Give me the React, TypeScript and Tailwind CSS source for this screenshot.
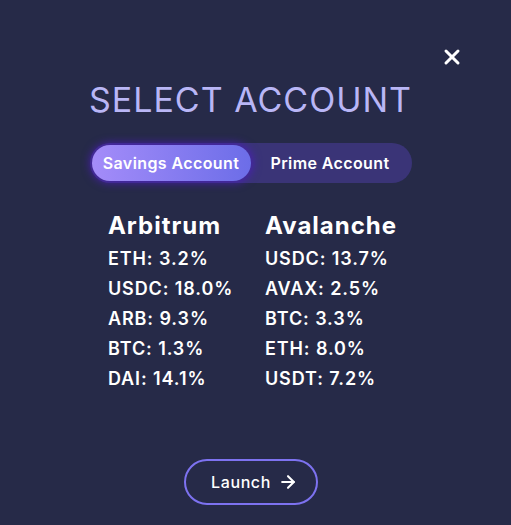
import { X, ArrowRight } from 'lucide-react';

const arbitrum = ['ETH: 3.2%', 'USDC: 18.0%', 'ARB: 9.3%', 'BTC: 1.3%', 'DAI: 14.1%'];
const avalanche = ['USDC: 13.7%', 'AVAX: 2.5%', 'BTC: 3.3%', 'ETH: 8.0%', 'USDT: 7.2%'];

function Column({ title, rows }: { title: string; rows: string[] }) {
  return (
    <div className="flex flex-col">
      <div className="text-[24px] font-bold leading-[28px] tracking-[1px] text-white">{title}</div>
      <div className="mt-[4px] flex flex-col">
        {rows.map((r) => (
          <div key={r} className="text-[18px] font-semibold leading-[30px] tracking-[0.9px] text-white">
            {r}
          </div>
        ))}
      </div>
    </div>
  );
}

export default function App() {
  return (
    <div
      className="flex h-[525px] w-full flex-col items-center bg-[#262a48] pr-[10px]"
      style={{ fontFamily: 'Inter, "Open Sans", sans-serif' }}
    >
      <div className="flex w-full justify-end pr-[37px] pt-[45px]">
        <X className="h-[24px] w-[24px] text-white" strokeWidth={3} />
      </div>
      <h1 className="mt-[11px] text-[34px] font-normal leading-[40px] tracking-[1px] text-[#b9b6f6]">
        SELECT ACCOUNT
      </h1>
      <div className="mt-[23px] flex h-[40px] w-[322px] items-center rounded-full bg-[#3a3477] p-[2px]">
        <button className="flex h-[36px] w-[159px] items-center justify-center rounded-full bg-gradient-to-r from-[#a48cf9] to-[#6c6de8] text-[16px] font-semibold tracking-[0.4px] text-white shadow-[0_0_8px_2px_rgba(76,29,190,0.8)]">
          Savings Account
        </button>
        <button className="flex h-[36px] flex-1 items-center justify-center text-[16px] font-semibold tracking-[0.4px] text-white">
          Prime Account
        </button>
      </div>
      <div className="mt-[29px] ml-[4px] grid grid-cols-[157px_auto]">
        <Column title="Arbitrum" rows={arbitrum} />
        <Column title="Avalanche" rows={avalanche} />
      </div>
      <button className="mt-auto mb-[20px] flex h-[46px] w-[134px] items-center justify-center gap-[7px] rounded-full border-2 border-[#7d72f0] pl-[8px] text-[16px] font-medium tracking-[0.6px] text-white">
        Launch
        <ArrowRight className="h-[20px] w-[20px]" strokeWidth={2.5} />
      </button>
    </div>
  );
}
